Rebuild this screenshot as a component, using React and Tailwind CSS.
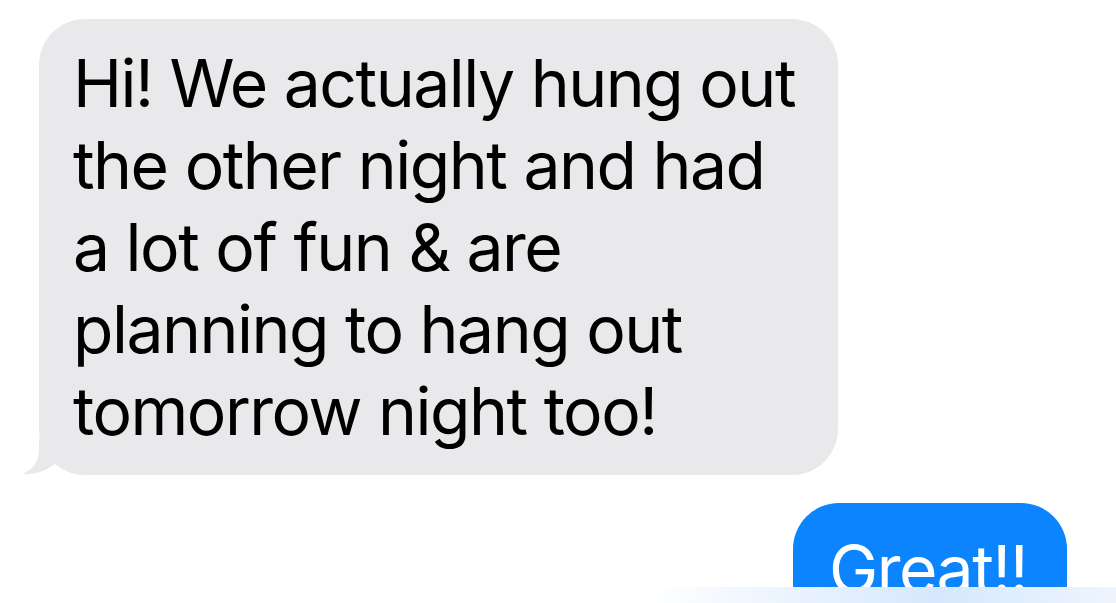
export default function App() {
  return (
    <div className="relative w-[1116px] h-[603px] overflow-hidden bg-white font-['Inter','Liberation_Sans',sans-serif] text-black">
      <div className="flex flex-col pt-[19px]">
        <div className="relative ml-[39px] w-[799px]">
          <div className="relative z-10 rounded-[46px] bg-[#e9e9eb] pl-[34px] pt-[23px] pb-[23px] text-[66px] leading-[82px] tracking-[-1.5px]">
            Hi! We actually hung out
            <br />
            the other night and had
            <br />
            a lot of fun &amp; are
            <br />
            planning to hang out
            <br />
            tomorrow night too!
          </div>
          <BubbleTail />
        </div>

        <div className="flex justify-end pr-[49px] mt-[28px]">
          <div className="w-[274px] rounded-[46px] bg-[#0b84fe] pl-[36px] pt-[25px] pb-[20px] text-white text-[66px] leading-[82px] tracking-[-1.5px]">
            Great!!
          </div>
        </div>
      </div>

      {/* input bar fade along the bottom edge */}
      <div className="absolute left-0 right-0 bottom-0 h-[16px] bg-gradient-to-r from-white from-[58%] via-[#d6e8fd] via-[84%] to-[#eef5fe]" />
    </div>
  )
}

function BubbleTail() {
  return (
    <svg
      className="absolute left-[-19px] bottom-0 z-0"
      width="70" height="36" viewBox="0 0 70 36"
    >
      <path
        d="M19 0 L19 10 C19 24 12 31 2 35 C14 36 27 32 36 24 C44 31 55 35 70 36 L70 0 Z"
        fill="#e9e9eb"
      />
    </svg>
  )
}
